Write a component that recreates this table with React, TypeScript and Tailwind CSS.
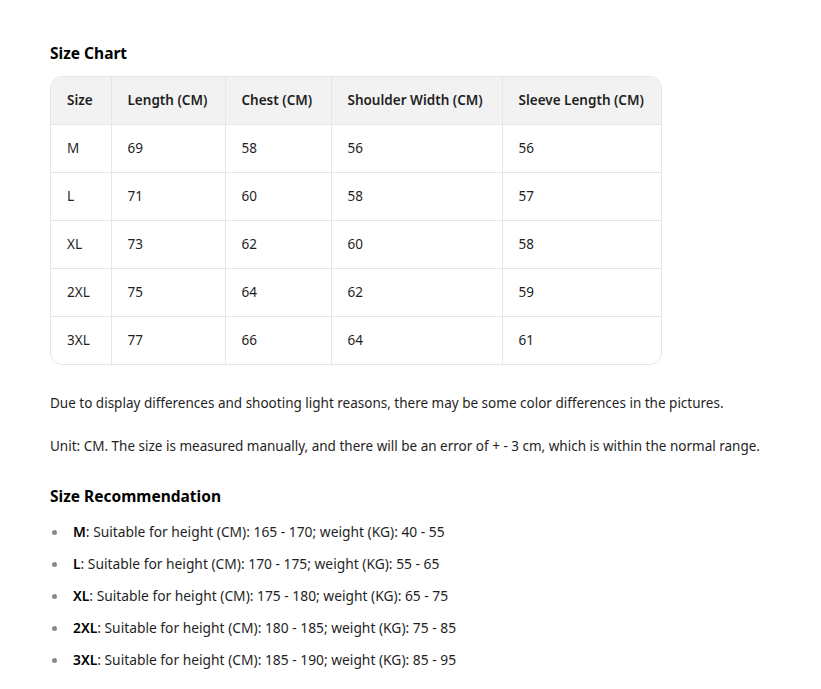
const rows = [
  ['M', '69', '58', '56', '56'],
  ['L', '71', '60', '58', '57'],
  ['XL', '73', '62', '60', '58'],
  ['2XL', '75', '64', '62', '59'],
  ['3XL', '77', '66', '64', '61'],
];

const headers = ['Size', 'Length (CM)', 'Chest (CM)', 'Shoulder Width (CM)', 'Sleeve Length (CM)'];
const colWidths = ['w-[60px]', 'w-[114px]', 'w-[106px]', 'w-[171px]', 'w-[160px]'];

const recs = [
  { size: 'M', text: 'Suitable for height (CM): 165 - 170; weight (KG): 40 - 55' },
  { size: 'L', text: 'Suitable for height (CM): 170 - 175; weight (KG): 55 - 65' },
  { size: 'XL', text: 'Suitable for height (CM): 175 - 180; weight (KG): 65 - 75' },
  { size: '2XL', text: 'Suitable for height (CM): 180 - 185; weight (KG): 75 - 85' },
  { size: '3XL', text: 'Suitable for height (CM): 185 - 190; weight (KG): 85 - 95' },
];

export default function App() {
  return (
    <div className="min-h-screen bg-white px-[50px] pt-[42px] text-[13.5px] text-[#1f1f1f] font-['Noto_Sans',sans-serif]">
      <h2 className="text-[15.5px] font-bold leading-[22px] text-black">Size Chart</h2>

      <div className="mt-[12px] w-[612px] overflow-hidden rounded-[12px] border border-[#e6e6e6]">
        <table className="w-full table-fixed border-collapse">
          <thead>
            <tr className="h-[47px] bg-[#f2f2f2]">
              {headers.map((h, i) => (
                <th
                  key={h}
                  className={`${colWidths[i]} whitespace-nowrap px-4 text-left text-[13.5px] font-semibold ${i > 0 ? 'border-l border-[#e6e6e6]' : ''}`}
                >
                  {h}
                </th>
              ))}
            </tr>
          </thead>
          <tbody>
            {rows.map((r) => (
              <tr key={r[0]} className="h-[48px] border-t border-[#e6e6e6]">
                {r.map((c, i) => (
                  <td key={i} className={`px-4 ${i > 0 ? 'border-l border-[#e6e6e6]' : ''}`}>
                    {c}
                  </td>
                ))}
              </tr>
            ))}
          </tbody>
        </table>
      </div>

      <p className="mt-[27px] whitespace-nowrap leading-[22px]">
        Due to display differences and shooting light reasons, there may be some color differences in the pictures.
      </p>
      <p className="mt-[21px] whitespace-nowrap leading-[22px]">
        Unit: CM. The size is measured manually, and there will be an error of + - 3 cm, which is within the normal range.
      </p>

      <h2 className="mt-[28px] text-[15.5px] font-bold leading-[22px] text-black">Size Recommendation</h2>
      <ul className="mt-[14px] flex flex-col gap-[10px] text-[13.8px]">
        {recs.map((r) => (
          <li key={r.size} className="flex items-center leading-[22px]">
            <span className="mr-[16px] ml-[2px] h-[5px] w-[5px] rounded-full bg-[#8a8a8a]" />
            <span>
              <strong className="font-semibold text-black">{r.size}</strong>: {r.text}
            </span>
          </li>
        ))}
      </ul>
    </div>
  );
}
